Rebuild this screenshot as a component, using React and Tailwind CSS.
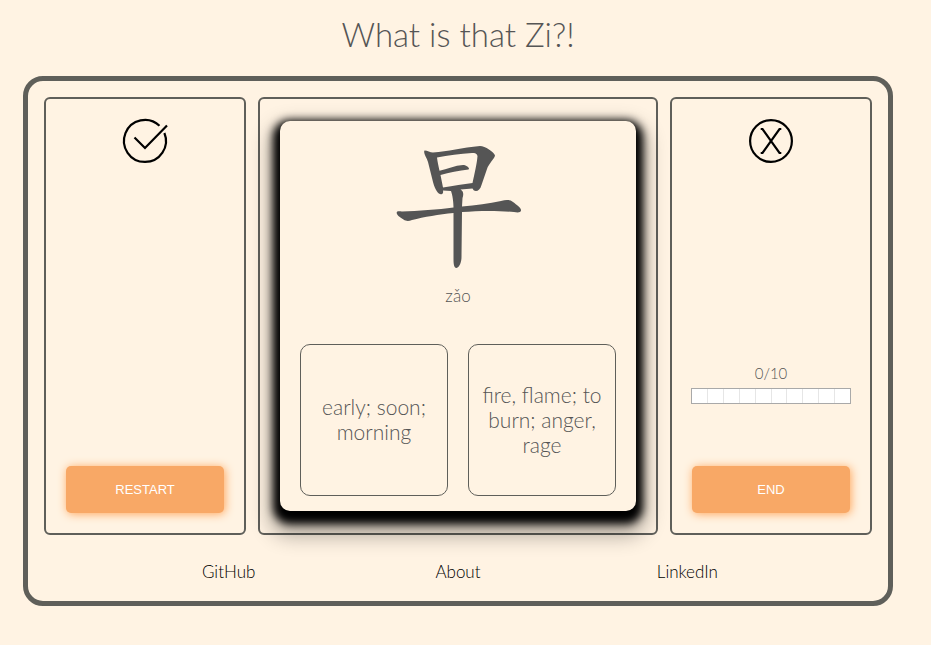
import { useState } from "react";

const TOTAL = 10;
const answers = ["early; soon; morning", "fire, flame; to burn; anger, rage"];
const links = ["GitHub", "About", "LinkedIn"];

function Panel({ children, className }) {
  return (
    <section className={`rounded-md border-2 border-[#5f5f5a] ${className}`}>{children}</section>
  );
}

function ActionButton({ children, onClick }) {
  return (
    <button
      type="button"
      onClick={onClick}
      className="h-[47px] w-full rounded-[5px] bg-[#f8a866] font-['Liberation_Sans',Arial,sans-serif] text-[13px] font-normal text-white shadow-[1px_1px_10px_#ffa559]"
    >
      {children}
    </button>
  );
}

function CheckIcon() {
  return (
    <svg
      viewBox="1 1 44 44"
      className="size-11 overflow-visible"
      fill="none"
      stroke="#000"
      strokeWidth="2.2"
      role="img"
      aria-label="Correct"
    >
      <path d="M37.500 7.800A21 21 0 1 0 42.400 15" />
      <path d="M12.500 19.500L23 30L45 7.500" />
    </svg>
  );
}

function CrossIcon() {
  return (
    <svg
      viewBox="1 1 44 44"
      className="size-11"
      fill="none"
      stroke="#000"
      strokeWidth="2.2"
      role="img"
      aria-label="Wrong"
    >
      <circle cx="23" cy="23" r="20.900" />
      <path d="M12.700 11H14.500L31.500 35H33.300M33.300 11H31.500L14.500 35H12.700" />
    </svg>
  );
}

function ZaoGlyph() {
  return (
    <svg viewBox="-1 0 130 128" className="h-32 w-[130px]" fill="#555" role="img" aria-label="早">
      <path
        fillRule="evenodd"
        d="M30.500 5.500C33 5.300 36 7.500 39 7.500C54 6.500 68 2.500 86 1C91 1 100 7 101 10.500C101 13 94.500 19 93 24L87.500 40C86.500 44 84 46 82 46C80 46 79 44.500 78.500 43.500L66.500 44.500C70 46.500 69.500 50 68.500 53L68 61.500C82 60.500 95 58.500 107 56C112 54.500 116 54.500 119 57C123 60 127.500 63 127 65.500C126.500 68 123 67.500 120 67C105 65.500 85 65.500 68 67L67.500 112C67.500 117 65.500 122.500 62.500 123C59.500 122.500 59.500 118 59.500 112L59.500 68C45 69.500 30 72 18 75C15 76 12.500 76.500 9.500 74.500C6.500 72.500 3 70.500 2.700 68C2.500 66 4.500 66 8 66.500C24 66 44 64.500 59.500 62.500C59.500 57 58.500 50 57 46L49 45.500C49.500 48.500 48.500 50 46 49C43 48 40 42 38.500 35L34 17C32.500 12 29 8 30.500 5.500ZM43 12.500C43.500 17 44.500 21 45.500 25.700C53 24 61 20.500 69 20C72 20 76.500 23 74.500 24.500C65 25.500 55 27.500 46.500 30L49 42.500C60 41 69 39 78.500 38C80.500 29 83 18 83.500 11C83 8.500 81 8 78 8C66 8.500 54 10.500 43 12.500Z"
      />
    </svg>
  );
}

function ProgressBar({ done }) {
  return (
    <div>
      <p id="progress-label" className="text-center text-[15px] leading-[22px]">
        {done}/{TOTAL}
      </p>
      <div
        role="progressbar"
        aria-labelledby="progress-label"
        aria-valuenow={done}
        aria-valuemin={0}
        aria-valuemax={TOTAL}
        className="mt-1 flex h-4 border border-[#a9a9a9] bg-white"
      >
        {Array.from({ length: TOTAL }, (_, i) => (
          <span
            key={i}
            className={`flex-1 border-r border-[#e6e6e6] last:border-r-0 ${i < done ? "bg-[#f8a866]" : ""}`}
          />
        ))}
      </div>
    </div>
  );
}

export default function App() {
  const [done, setDone] = useState(0);

  return (
    <div className="min-h-screen bg-[#fff3e3] pr-[15px] font-['Lato',sans-serif] font-light text-[#555]">
      <h1 className="pt-[13px] text-center text-[33px] leading-[42px]">What is that Zi?!</h1>
      <main className="mx-[23px] mt-[21px] rounded-[20px] border-[5px] border-[#5f5f5a]">
        <div className="grid grid-cols-[101fr_200fr_101fr] gap-3 px-4 pt-4">
          <Panel className="flex flex-col items-center justify-between p-5">
            <CheckIcon />
            <ActionButton onClick={() => setDone(0)}>RESTART</ActionButton>
          </Panel>
          <Panel className="px-5 py-[22px]">
            <article className="flex flex-col items-center rounded-[10px] bg-[#fff3e3] px-5 pt-6 pb-[15px] shadow-[0_6px_9px_7px_#000,0_14px_20px_11px_rgba(0,0,0,0.3)]">
              <ZaoGlyph />
              <p className="mt-[11px] text-[17px] leading-6">zǎo</p>
              <div className="mt-9 grid w-full grid-cols-2 gap-5">
                {answers.map((answer) => (
                  <button
                    key={answer}
                    type="button"
                    onClick={() => setDone((n) => Math.min(n + 1, TOTAL))}
                    className="h-[152px] rounded-[10px] border border-[#5f5f5a] px-2 pb-0.5 text-[21px] leading-[25px]"
                  >
                    {answer}
                  </button>
                ))}
              </div>
            </article>
          </Panel>
          <Panel className="flex flex-col items-center p-5">
            <CrossIcon />
            <div className="-mx-px mt-auto mb-[62px] self-stretch">
              <ProgressBar done={done} />
            </div>
            <ActionButton>END</ActionButton>
          </Panel>
        </div>
        <footer className="mx-auto grid w-4/5 grid-cols-3 pt-[25px] pb-[17px] text-center text-[17px] leading-6 text-black">
          {links.map((link) => (
            <a key={link} href="#">
              {link}
            </a>
          ))}
        </footer>
      </main>
    </div>
  );
}
